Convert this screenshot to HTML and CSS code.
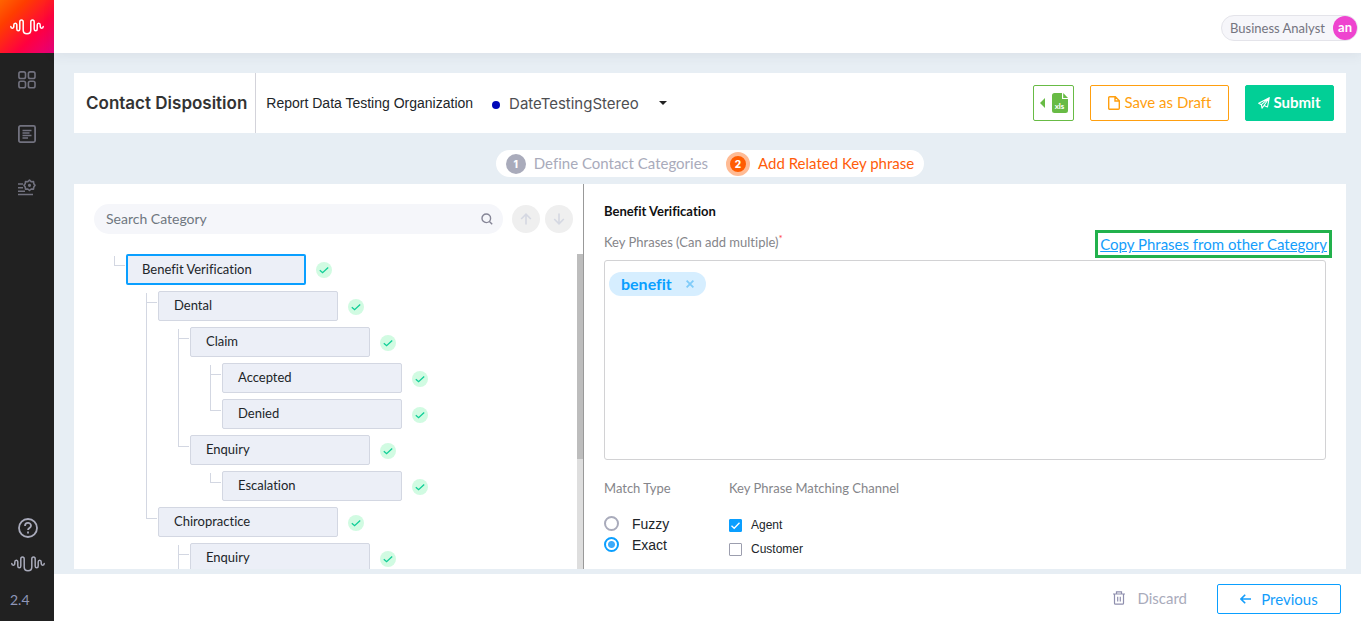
FILE: index.html
```html
<!DOCTYPE html>
<html lang="en">
<head>
<meta charset="utf-8">
<title>Contact Disposition</title>
<link rel="stylesheet" href="styles.css">
</head>
<body>
<svg class="defs" aria-hidden="true">
  <symbol id="wave" viewBox="0 0 34 16"><path d="M.8 7.5c0 2.2 3 2.2 3 0V6c0-2.4 3-2.4 3 0v4c0 2.4 3 2.4 3 0V3c0-2.6 3.4-2.6 3.4 0v8c0 5 7.6 5 7.6 0V3c0-2.6 3.4-2.6 3.4 0v7c0 2.4 3 2.4 3 0V6c0-2.4 3-2.4 3 0v1.5c0 2.2 3 2.2 3 0" fill="none" stroke="currentColor" stroke-width="1.5" stroke-linecap="round"/></symbol>
  <symbol id="check" viewBox="0 0 16 16"><circle cx="8" cy="8" r="8" fill="#d1fbe2"/><path d="M3.8 8.2l2.8 2.5 5.6-5.2" fill="none" stroke="#0fce97" stroke-width="1.3"/></symbol>
</svg>

<aside class="sidebar">
  <a class="logo" href="#" aria-label="Home"><svg width="34" height="16"><use href="#wave"/></svg></a>
  <nav class="side-nav">
    <a href="#" aria-label="Dashboard"><svg width="18" height="18" viewBox="0 0 18 18" fill="none" stroke="currentColor" stroke-width="1.6"><rect x=".9" y=".9" width="6.6" height="6.6" rx="1.8"/><rect x="10.4" y=".9" width="6.6" height="6.6" rx="1.8"/><rect x=".9" y="10.2" width="6.6" height="6.6" rx="1.8"/><rect x="10.4" y="10.2" width="6.6" height="6.6" rx="1.8"/></svg></a>
    <a href="#" aria-label="Reports"><svg width="18" height="18" viewBox="0 0 18 18" fill="none" stroke="currentColor" stroke-width="1.8"><rect x=".9" y=".9" width="16.2" height="16.2" rx="1.5"/><path d="M4.5 5.500h9M4.500 8h7M4.500 10.500h9M4.500 13h5.500" stroke-width="1.400"/></svg></a>
    <a href="#" aria-label="Configuration"><svg width="18" height="18" viewBox="0 0 18 18" fill="none" stroke="currentColor" stroke-width="1.600"><path d="M0 5h5M0 8.700h5M0 12.300h7M0 15.500h15"/><path d="M11.500 1.200l1.700 1.500 2.300-.2.300 2.300 1.200 1.500-1.200 1.600-.3 2.200-2.300-.1-1.700 1.500-1.700-1.500-2.300.1-.3-2.200L6 6.300l1.200-1.500.3-2.300 2.300.2z" stroke-linejoin="round"/><circle cx="11.500" cy="6.300" r=".8"/></svg></a>
  </nav>
  <div class="side-foot">
    <a href="#" aria-label="Help"><svg width="20" height="20" viewBox="0 0 20 20" fill="none" stroke="currentColor" stroke-width="1.800"><circle cx="10" cy="10" r="9"/><path d="M7 8c0-4 6-4 6-.3 0 2.200-3 2.200-3 4.300"/><path d="M10 13.600v1.900"/></svg></a>
    <svg width="34" height="16"><use href="#wave"/></svg>
    <span class="version">2.4</span>
  </div>
</aside>

<div class="page">
  <header class="topbar">
    <button class="user" type="button"><span>Business Analyst</span><span class="avatar">an</span></button>
  </header>

  <main class="main">
    <section class="titlebar">
      <h1>Contact Disposition</h1>
      <span class="org">Report Data Testing Organization</span>
      <span class="dot"></span>
      <div class="stereo-wrap">
        <select class="stereo" aria-label="Stereo"><option>DateTestingStereo</option></select>
        <svg width="8" height="4" viewBox="0 0 8 4"><path d="M0 0h8L4 4z" fill="#222"/></svg>
      </div>
      <div class="actions">
        <button class="btn xls" type="button" aria-label="Export xls">
          <svg width="5" height="10" viewBox="0 0 5 10"><path d="M5 0v10L0 5z" fill="currentColor"/></svg>
          <span class="sheet"><svg width="16" height="20" viewBox="0 0 16 20" fill="currentColor"><path d="M2.500 0H10v6h6v11.500a2.500 2.500 0 0 1-2.500 2.500h-11A2.500 2.500 0 0 1 0 17.500v-15A2.500 2.500 0 0 1 2.500 0z"/><path d="M11.200 0L16 4.900h-4.800z"/></svg><span>xls</span></span>
        </button>
        <button class="btn draft" type="button"><svg width="12" height="14" viewBox="0 0 12 14" fill="none" stroke="currentColor" stroke-width="1.400"><path d="M.7 1.700a1 1 0 0 1 1-1h5.600l4 4v7.600a1 1 0 0 1-1 1H1.700a1 1 0 0 1-1-1zM7 .7V5h4.300"/></svg><span>Save as Draft</span></button>
        <button class="btn submit" type="button"><svg width="12" height="12" viewBox="0 0 12 12" fill="none" stroke="currentColor" stroke-width="1.100" stroke-linejoin="round"><path d="M11.300.7L.7 6.300l2.700 1.400zM11.300.7L9.500 10 6 8.500zM3.400 7.700L4 11.200l2-2.700L11.300.7"/></svg><span>Submit</span></button>
      </div>
    </section>

    <ol class="steps">
      <li><span class="num">1</span><span class="step-name">Define Contact Categories</span></li>
      <li class="active"><span class="num">2</span><span class="step-name">Add Related Key phrase</span></li>
    </ol>

    <div class="panels">
      <section class="categories">
        <div class="search-row">
          <div class="search">
            <input type="text" placeholder="Search Category" aria-label="Search Category">
            <svg width="12" height="12" viewBox="0 0 12 12" fill="none" stroke="#858596" stroke-width="1.400"><circle cx="5.300" cy="5.300" r="4.300"/><path d="M8.400 8.400l2.800 2.800"/></svg>
          </div>
          <button class="round" type="button" aria-label="Previous match"><svg width="12" height="12" viewBox="0 0 12 12" fill="none" stroke="currentColor" stroke-width="1.600"><path d="M6 11.500V1.500M1.200 6L6 1.200 10.800 6"/></svg></button>
          <button class="round" type="button" aria-label="Next match"><svg width="12" height="12" viewBox="0 0 12 12" fill="none" stroke="currentColor" stroke-width="1.600"><path d="M6 .5v10M1.200 6L6 10.800 10.800 6"/></svg></button>
        </div>
        <div class="tree-area">
          <ul class="tree">
            <li>
              <div class="node selected"><button type="button">Benefit Verification</button><svg width="16" height="16"><use href="#check"/></svg></div>
              <ul>
                <li class="continues">
                  <div class="node"><button type="button">Dental</button><svg width="16" height="16"><use href="#check"/></svg></div>
                  <ul>
                    <li class="continues">
                      <div class="node"><button type="button">Claim</button><svg width="16" height="16"><use href="#check"/></svg></div>
                      <ul>
                        <li class="continues"><div class="node"><button type="button">Accepted</button><svg width="16" height="16"><use href="#check"/></svg></div></li>
                        <li><div class="node"><button type="button">Denied</button><svg width="16" height="16"><use href="#check"/></svg></div></li>
                      </ul>
                    </li>
                    <li>
                      <div class="node"><button type="button">Enquiry</button><svg width="16" height="16"><use href="#check"/></svg></div>
                      <ul>
                        <li><div class="node"><button type="button">Escalation</button><svg width="16" height="16"><use href="#check"/></svg></div></li>
                      </ul>
                    </li>
                  </ul>
                </li>
                <li>
                  <div class="node"><button type="button">Chiropractice</button><svg width="16" height="16"><use href="#check"/></svg></div>
                  <ul>
                    <li class="continues"><div class="node"><button type="button">Enquiry</button><svg width="16" height="16"><use href="#check"/></svg></div></li>
                  </ul>
                </li>
              </ul>
            </li>
          </ul>
          <div class="scroll-track"><div class="scroll-thumb"></div></div>
        </div>
      </section>

      <section class="phrases">
        <h2>Benefit Verification</h2>
        <div class="phrase-head">
          <span class="label">Key Phrases (Can add multiple)<sup>*</sup></span>
          <a class="copy" href="#">Copy Phrases from other Category</a>
        </div>
        <div class="phrase-box">
          <span class="tag">benefit<button type="button" aria-label="Remove benefit"><svg width="8" height="8" viewBox="0 0 8 8" stroke="#7fcbf9" stroke-width="1.800"><path d="M.6.6l6.800 6.800M7.400.6L.6 7.400"/></svg></button></span>
        </div>
        <div class="options">
          <fieldset class="match">
            <legend class="label">Match Type</legend>
            <label><input type="radio" name="match">Fuzzy</label>
            <label><input type="radio" name="match" checked>Exact</label>
          </fieldset>
          <fieldset class="channel">
            <legend class="label">Key Phrase Matching Channel</legend>
            <label><span class="box"><input type="checkbox" checked><svg width="13" height="13" viewBox="0 0 13 13" fill="none" stroke="#fff" stroke-width="1.300"><path d="M2.500 6.800l2.700 2.500 5.300-5.600"/></svg></span>Agent</label>
            <label><span class="box"><input type="checkbox"></span>Customer</label>
          </fieldset>
        </div>
      </section>
    </div>
  </main>

  <footer class="footer">
    <button class="discard" type="button"><svg width="12" height="14" viewBox="0 0 12 14" fill="none" stroke="#8f8fae" stroke-width="1.200"><path d="M0 3h12M3.500 3V.8h5V3M1.500 3v9.200a1 1 0 0 0 1 1h7a1 1 0 0 0 1-1V3M4.700 5.800v4.700M7.300 5.800v4.700"/></svg>Discard</button>
    <button class="previous" type="button"><svg width="11" height="10" viewBox="0 0 11 10" fill="none" stroke="currentColor" stroke-width="1.600"><path d="M11 5H1.200M5.200.8L1 5l4.200 4.200"/></svg>Previous</button>
  </footer>
</div>
</body>
</html>
```
FILE: styles.css
```css
* { box-sizing: border-box; }

body {
  margin: 0;
  display: flex;
  height: 100vh;
  overflow: hidden;
  font: 14px/20px Lato, "Noto Sans", sans-serif;
  font-variant-ligatures: none;
  color: #212529;
  background: #e7eef4;
}

h1, h2, ul, ol, fieldset, legend { margin: 0; padding: 0; border: 0; list-style: none; }
button, input, select { font: inherit; font-variant-ligatures: none; color: inherit; }
button { border: 0; background: none; padding: 0; }
svg { display: block; flex: none; }
.defs { position: absolute; width: 0; height: 0; }

/* Sidebar */
.sidebar {
  flex: none;
  width: 54px;
  display: flex;
  flex-direction: column;
  background: #212121;
}
.logo {
  display: grid;
  place-items: center;
  height: 53px;
  color: #fff;
  background: linear-gradient(135deg, #ff6400 0%, #ff3d00 25%, #ff0040 65%, #e5007d 100%);
}
.side-nav {
  flex: 1;
  display: flex;
  flex-direction: column;
  align-items: center;
  gap: 36px;
  padding-top: 18px;
}
.side-nav a { color: #72727f; }
.side-foot {
  display: flex;
  flex-direction: column;
  align-items: center;
  gap: 18px;
  padding: 0 0 11px 2px;
  color: #a9abbb;
}
.side-foot a { color: inherit; }
.version { align-self: flex-start; padding-left: 8px; color: #8f96b8; }

/* Page frame */
.page { flex: 1; min-width: 0; display: flex; flex-direction: column; }
.topbar {
  flex: none;
  height: 53px;
  display: flex;
  align-items: center;
  justify-content: flex-end;
  padding: 2px 3px 0 0;
  background: #fff;
  box-shadow: 0 2px 12px rgba(60, 70, 80, .08);
}
.user {
  display: flex;
  align-items: center;
  gap: 8px;
  height: 26px;
  padding-left: 8px;
  border: 1px solid #e4e4ea;
  border-radius: 13px;
  background: #f6f6fa;
  color: #74747f;
  font-size: 13px;
}
.avatar {
  width: 24px;
  height: 24px;
  border-radius: 50%;
  background: #ee44cf;
  color: #fff;
  font-weight: 700;
  line-height: 22px;
  text-align: center;
}
.main {
  flex: 1;
  min-height: 0;
  display: flex;
  flex-direction: column;
  padding: 20px 15px 5px 20px;
}

/* Title bar */
.titlebar {
  flex: none;
  display: flex;
  align-items: center;
  height: 60px;
  padding-right: 12px;
  background: #fff;
}
.titlebar h1 {
  align-self: stretch;
  padding: 0 8px 0 12px;
  border-right: 1px solid #d3d3da;
  font: 600 17px/60px Inter, sans-serif;
  color: #333;
}
.org { padding: 0 19px 0 10px; font: 14px/20px "Liberation Sans", sans-serif; }
.dot { width: 8px; height: 8px; margin: 4px 9px 0 0; border-radius: 50%; background: #0007b8; }
.stereo-wrap { display: flex; align-items: center; gap: 20px; }
.stereo {
  appearance: none;
  border: 0;
  padding: 2px 0 0;
  background: none;
  font: 15px/20px Inter, sans-serif;
  color: #4e4e52;
}
.actions { display: flex; gap: 16px; margin-left: auto; }
.btn {
  display: flex;
  align-items: center;
  justify-content: center;
  gap: 5px;
  height: 36px;
  border: 1px solid currentColor;
  border-radius: 2px;
  font-size: 15px;
}
.btn > span { padding-bottom: 2px; }
.xls { width: 41px; gap: 7px; color: #68bb45; }
.xls .sheet { position: relative; padding: 0; }
.sheet span {
  position: absolute;
  left: 0;
  right: 0;
  bottom: 3px;
  color: #fff;
  font-size: 8px;
  font-weight: 700;
  line-height: 8px;
  text-align: center;
}
.draft { width: 139px; color: #ff9f0f; }
.submit { width: 89px; gap: 3px; border-color: #02cf96; background: #02cf96; color: #fff; font-weight: 700; }

/* Steps */
.steps {
  flex: none;
  align-self: center;
  display: flex;
  gap: 18px;
  height: 27px;
  margin: 17px 0 7px;
  padding: 0 10px;
  border-radius: 14px;
  background: #fff;
  font-size: 15px;
  color: #a9abbb;
}
.steps li { display: flex; align-items: center; gap: 8px; }
.step-name { padding-bottom: 2px; }
.num {
  width: 20px;
  height: 20px;
  border-radius: 50%;
  background: #a9abbb;
  color: #fff;
  font: 800 10px/20px Inter, sans-serif;
  text-align: center;
}
.steps .active { color: #ff5c0a; }
.active .num {
  width: 24px;
  height: 24px;
  border: 4px solid #ffbb94;
  background: #ff5c00;
  line-height: 16px;
}

/* Panels */
.panels {
  flex: 1;
  min-height: 0;
  display: grid;
  grid-template-columns: 510fr 762fr;
  background: #fff;
}
.categories {
  min-height: 0;
  display: flex;
  flex-direction: column;
  padding: 20px 0 0 20px;
  border-right: 1px solid #999;
}
.search-row { display: flex; align-items: center; gap: 5px; padding-right: 10px; }
.search {
  flex: 1;
  display: flex;
  align-items: center;
  height: 30px;
  margin-right: 4px;
  padding: 0 10px 0 12px;
  border-radius: 15px;
  background: #f5f6fa;
}
.search input { flex: 1; min-width: 0; border: 0; padding: 0; background: none; outline: 0; }
.search input::placeholder { color: #6f777f; opacity: 1; }
.round {
  display: grid;
  place-items: center;
  width: 28px;
  height: 28px;
  border-radius: 50%;
  background: #efefef;
  color: #d5d8e2;
}
.tree-area { flex: 1; min-height: 0; display: flex; margin-top: 20px; overflow: hidden; }
.tree { flex: 1; }
.tree li { position: relative; margin: 0 0 0 32px; padding-top: 6px; }
.tree > li { padding-top: 0; }
/* elbow from the parent's rail to the node */
.tree li::before {
  content: "";
  position: absolute;
  left: -12px;
  top: 8px;
  width: 10px;
  height: 9px;
  border: solid #d3d7e2;
  border-width: 0 0 1px 1px;
}
.tree > li::before { top: 2px; }
/* rail running on to the next sibling */
.tree .continues::after {
  content: "";
  position: absolute;
  left: -12px;
  top: 8px;
  bottom: -8px;
  border-left: 1px solid #d3d7e2;
}
.node { display: flex; align-items: center; gap: 10px; }
.node button {
  width: 180px;
  height: 30px;
  padding: 0 15px 2px;
  border: 1px solid #d3d7e2;
  border-radius: 2px;
  background: #eceff7;
  font-size: 13px;
  text-align: left;
}
.node svg { margin-top: 2px; }
.selected button { height: 31px; padding: 0 14px 1px; border: 2px solid #0a9fff; }
.selected svg { margin-top: 0; }
.scroll-track { width: 6px; background: #dedede; }
.scroll-thumb { height: 65%; background: #bdbdbd; }

.phrases { padding: 17px 20px 0; }
.phrases h2 { font-size: 13px; font-weight: 700; line-height: 20px; color: #111; }
.label { color: #85858a; font-size: 13px; line-height: 20px; }
.label sup { color: #f44; font-size: 10px; line-height: 0; }
.phrase-head { display: flex; align-items: center; justify-content: space-between; margin-top: 9px; }
.phrase-head .label { padding-bottom: 4px; }
.copy {
  margin-right: -6px;
  padding: 0 2px;
  border: 3px solid #22b14c;
  color: #149dfb;
  font-size: 15px;
  line-height: 22px;
}
.phrase-box {
  height: 200px;
  margin-top: 2px;
  padding: 11px 4px;
  border: 1px solid #d2d2d4;
  border-radius: 3px;
}
.tag {
  display: inline-flex;
  align-items: center;
  gap: 14px;
  height: 24px;
  padding: 0 12px;
  border-radius: 12px;
  background: #d6eeff;
  color: #0a9fff;
  font-size: 16px;
  font-weight: 700;
}
.options { display: flex; margin-top: 18px; }
.match { width: 125px; }
.options label {
  display: flex;
  align-items: center;
  font-family: "Liberation Sans", sans-serif;
}
.match label { gap: 13px; height: 21px; font-size: 14px; }
.match .label, .channel .label { margin-bottom: 15px; }
.channel label { gap: 9px; height: 24px; font-size: 12px; }
.match input {
  appearance: none;
  width: 15px;
  height: 15px;
  margin: 0;
  border: 2px solid #a9abbb;
  border-radius: 50%;
}
.match input:checked { border-color: #0a9fff; background: radial-gradient(circle, #3caafa 3px, #fff 4px); }
.box { display: grid; }
.box > * { grid-area: 1 / 1; }
.box input {
  appearance: none;
  width: 13px;
  height: 13px;
  margin: 0;
  border: 1px solid #9c9eae;
  border-radius: 1px;
}
.box input:checked { border-color: #0a9fff; background: #0a9fff; }
.box svg { z-index: 1; pointer-events: none; }

/* Footer */
.footer {
  flex: none;
  display: flex;
  align-items: center;
  justify-content: flex-end;
  gap: 30px;
  height: 47px;
  padding: 0 20px 0 0;
  background: #fff;
  font-size: 15px;
}
.footer button { display: flex; align-items: center; justify-content: center; }
.discard { gap: 12px; color: #a9abbb; }
.footer .previous {
  gap: 10px;
  width: 124px;
  height: 30px;
  margin-top: 3px;
  border: 1px solid #0a9fff;
  border-radius: 2px;
  color: #149dfb;
}
```
